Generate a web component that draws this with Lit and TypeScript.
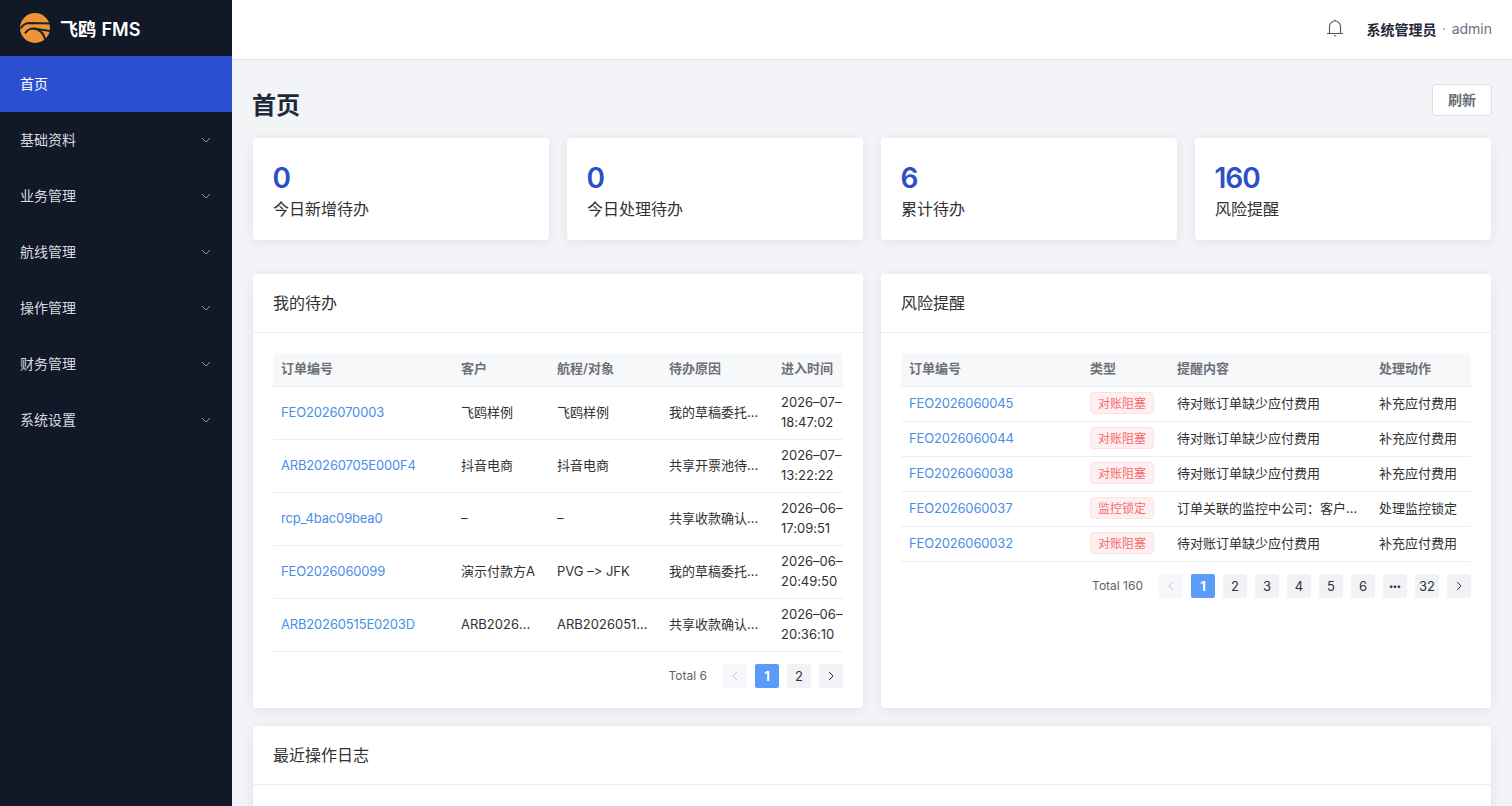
import {LitElement, css, html, nothing} from 'lit';
import {customElement} from 'lit/decorators.js';

const menu = ['基础资料', '业务管理', '航线管理', '操作管理', '财务管理', '系统设置'];

const stats = [
  {value: '0', label: '今日新增待办'},
  {value: '0', label: '今日处理待办'},
  {value: '6', label: '累计待办'},
  {value: '160', label: '风险提醒'},
];

const todos = [
  ['FEO2026070003', '飞鸥样例', '飞鸥样例', '我的草稿委托单待提交', '2026–07–', '18:47:02'],
  ['ARB20260705E000F4', '抖音电商', '抖音电商', '共享开票池待处理', '2026–07–', '13:22:22'],
  ['rcp_4bac09bea0', '–', '–', '共享收款确认待处理', '2026–06–', '17:09:51'],
  ['FEO2026060099', '演示付款方A', 'PVG –> JFK', '我的草稿委托单待提交', '2026–06–', '20:49:50'],
  ['ARB20260515E0203D', 'ARB20260515E0203D', 'ARB20260515E0203D', '共享收款确认待处理', '2026–06–', '20:36:10'],
];

const risks = [
  ['FEO2026060045', '对账阻塞', '待对账订单缺少应付费用', '补充应付费用'],
  ['FEO2026060044', '对账阻塞', '待对账订单缺少应付费用', '补充应付费用'],
  ['FEO2026060038', '对账阻塞', '待对账订单缺少应付费用', '补充应付费用'],
  ['FEO2026060037', '监控锁定', '订单关联的监控中公司：客户名称待确认', '处理监控锁定'],
  ['FEO2026060032', '对账阻塞', '待对账订单缺少应付费用', '补充应付费用'],
];

const chevronDown = html`<svg class="chev" viewBox="0 0 10 10"><path d="M1 3.2 5 7l4-3.8" fill="none" stroke="currentColor" stroke-width="1"/></svg>`;
const arrowLeft = html`<svg viewBox="0 0 10 10" width="10" height="10"><path d="M6.8 1 3 5l3.8 4" fill="none" stroke="currentColor"/></svg>`;
const arrowRight = html`<svg viewBox="0 0 10 10" width="10" height="10"><path d="M3.2 1 7 5 3.2 9" fill="none" stroke="currentColor"/></svg>`;

@customElement('app-root')
export class AppRoot extends LitElement {
  static styles = css`
    :host {
      display: flex;
      width: 1512px;
      height: 806px;
      overflow: hidden;
      font-family: Inter, "Liberation Sans", "Noto Sans CJK SC", sans-serif;
      font-size: 14px;
      font-feature-settings: "calt" 0;
      color: #303133;
      background: #f3f4f8;
    }

    * {
      box-sizing: border-box;
    }

    .side {
      flex: none;
      width: 232px;
      background: #111827;
      color: #d7dae0;
    }

    .brand {
      display: flex;
      align-items: center;
      gap: 10px;
      height: 56px;
      padding-left: 20px;
      color: #fff;
      font-size: 18px;
      font-weight: 600;
    }

    .brand-name {
      word-spacing: 1px;
    }

    .menu-item {
      display: flex;
      align-items: center;
      justify-content: space-between;
      height: 56px;
      padding: 0 21px 0 20px;
    }

    .menu-item.active {
      background: #2b4fd0;
      color: #fff;
    }

    .menu-label {
      margin-bottom: 2px;
    }

    .chev {
      width: 10px;
      height: 10px;
      color: #8d93a0;
    }

    .main {
      flex: 1;
      min-width: 0;
    }

    .top {
      display: flex;
      align-items: center;
      justify-content: flex-end;
      height: 60px;
      padding: 0 20px 2px 0;
      background: #fff;
      border-bottom: 1px solid #e4e7ed;
    }

    .bell {
      width: 18px;
      height: 18px;
      margin: 0 23px 2px 0;
      color: #4b5563;
    }

    .user {
      font-weight: 600;
      color: #1f2937;
    }

    .dot {
      margin: 0 5.5px;
      color: #909399;
    }

    .account {
      color: #6b7280;
    }

    .content {
      padding: 24px 21px 0;
    }

    .head {
      display: flex;
      align-items: flex-start;
      justify-content: space-between;
      height: 54px;
    }

    h1 {
      margin: 6px 0 0 -1px;
      font-size: 24px;
      line-height: 32px;
      font-weight: 600;
      color: #1f2937;
    }

    .refresh {
      width: 60px;
      height: 32px;
      margin-right: -1px;
      padding: 0 0 2px;
      border: 1px solid #dcdfe6;
      border-radius: 4px;
      background: #fff;
      color: #6b6e75;
      font: inherit;
      font-weight: 600;
    }

    .stats {
      display: grid;
      grid-template-columns: repeat(4, 1fr);
      gap: 18px;
      margin-bottom: 34px;
    }

    .card {
      background: #fff;
      border-radius: 4px;
      box-shadow: 0 2px 12px rgba(0, 0, 0, 0.08);
    }

    .stat {
      height: 102px;
      padding: 23px 20px 0;
    }

    .value {
      margin-left: -0.5px;
      font-size: 28px;
      line-height: 34px;
      font-weight: 600;
      letter-spacing: -1px;
      color: #2b4fc7;
    }

    .label {
      margin-top: 2px;
      font-size: 16px;
      line-height: 24px;
      color: #303133;
    }

    .panels {
      display: grid;
      grid-template-columns: 1fr 1fr;
      gap: 18px;
      margin-bottom: 18px;
    }

    .panel {
      height: 434px;
    }

    .panel-title {
      height: 59px;
      padding: 0 20px;
      border-bottom: 1px solid #ebeef5;
      font-size: 16px;
      line-height: 58px;
    }

    .panel-body {
      padding: 20px;
    }

    table {
      width: 100%;
      border-collapse: collapse;
      table-layout: fixed;
      font-size: 13px;
      color: #303133;
    }

    th {
      height: 33px;
      padding: 0 8px 4px;
      text-align: left;
      font-weight: 600;
      color: #6e7178;
      background: #f7f8fa;
      border-bottom: 1px solid #ebeef5;
    }

    td {
      padding: 0 8px 2px;
      border-bottom: 1px solid #ebeef5;
    }

    .todo td {
      height: 53px;
      line-height: 20px;
    }

    .risk td {
      height: 35px;
    }

    td > .cut {
      display: block;
      overflow: hidden;
      white-space: nowrap;
      text-overflow: ellipsis;
    }

    td > .cut.narrow {
      padding-right: 4px;
    }

    .time {
      white-space: nowrap;
      overflow: hidden;
      padding-right: 0;
    }

    .link {
      color: #4a8ee6;
      letter-spacing: -0.17px;
    }

    .tag {
      display: inline-flex;
      align-items: center;
      height: 22px;
      padding: 0 7px;
      border: 1px solid #fde2e2;
      border-radius: 4px;
      background: #fef0f0;
      color: #f56c6c;
      font-size: 12px;
    }

    .pager {
      display: flex;
      align-items: center;
      justify-content: flex-end;
      margin-top: 12px;
      font-size: 13px;
      color: #303133;
    }

    .total {
      margin-right: 8px;
      font-size: 12px;
      color: #606266;
    }

    .page {
      display: flex;
      align-items: center;
      justify-content: center;
      width: 24px;
      height: 24px;
      margin-left: 8px;
      border-radius: 2px;
      background: #f0f2f5;
    }

    .page.on {
      background: #5a9cf8;
      color: #fff;
      font-weight: 700;
    }

    .page.off {
      background: #f5f7fa;
      color: #c0c4cc;
    }

    .page.more {
      font-size: 8px;
      font-weight: 700;
    }
  `;

  private pager(total: number, pages: string[]) {
    return html`
      <div class="pager">
        <span class="total">Total ${total}</span>
        <span class="page off">${arrowLeft}</span>
        ${pages.map(
          (p, i) => html`<span class="page ${i === 0 ? 'on' : ''} ${p === '•••' ? 'more' : ''}">${p}</span>`
        )}
        <span class="page">${arrowRight}</span>
      </div>
    `;
  }

  render() {
    return html`
      <aside class="side">
        <div class="brand">
          <svg width="30" height="30" viewBox="0 0 30 30" fill="none" stroke="#1a2130" stroke-width="2">
            <circle cx="15" cy="15" r="15" fill="#f09433" stroke="none"/>
            <path d="M.7 15.5C3 11 6 10 10 10L30 10.5"/>
            <path d="M5 20.5C7 17 10 15.5 14 15.5L30 18"/>
            <path d="M14 15.5C20 16.5 24 21 25.5 27.5"/>
          </svg>
          <span class="brand-name">飞鸥 FMS</span>
        </div>
        <div class="menu-item active"><span class="menu-label">首页</span></div>
        ${menu.map((m) => html`<div class="menu-item"><span class="menu-label">${m}</span>${chevronDown}</div>`)}
      </aside>
      <div class="main">
        <header class="top">
          <svg class="bell" viewBox="0 0 18 18" fill="none" stroke="currentColor" stroke-width="1.1">
            <path d="M1 14.5h16M3.5 14.5V7.5a5.5 5.5 0 0 1 11 0v7"/>
            <path d="M9 .8V2M8 16.8h2"/>
          </svg>
          <span class="user">系统管理员</span><span class="dot">·</span><span class="account">admin</span>
        </header>
        <div class="content">
          <div class="head">
            <h1>首页</h1>
            <button class="refresh">刷新</button>
          </div>
          <div class="stats">
            ${stats.map(
              (s) => html`
                <div class="card stat">
                  <div class="value">${s.value}</div>
                  <div class="label">${s.label}</div>
                </div>
              `
            )}
          </div>
          <div class="panels">
            <section class="card panel">
              <div class="panel-title">我的待办</div>
              <div class="panel-body">
                <table class="todo">
                  <colgroup>
                    <col style="width: 180px"/><col style="width: 96px"/><col style="width: 112px"/><col style="width: 112px"/><col/>
                  </colgroup>
                  <thead>
                    <tr><th>订单编号</th><th>客户</th><th>航程/对象</th><th>待办原因</th><th>进入时间</th></tr>
                  </thead>
                  <tbody>
                    ${todos.map(
                      (r) => html`
                        <tr>
                          <td><span class="cut link">${r[0]}</span></td>
                          <td><span class="cut narrow">${r[1]}</span></td>
                          <td><span class="cut">${r[2]}</span></td>
                          <td><span class="cut">${r[3]}</span></td>
                          <td class="time">${r[4]}<br/>${r[5]}</td>
                        </tr>
                      `
                    )}
                  </tbody>
                </table>
                ${this.pager(6, ['1', '2'])}
              </div>
            </section>
            <section class="card panel">
              <div class="panel-title">风险提醒</div>
              <div class="panel-body">
                <table class="risk">
                  <colgroup>
                    <col style="width: 181px"/><col style="width: 87px"/><col style="width: 202px"/><col/>
                  </colgroup>
                  <thead>
                    <tr><th>订单编号</th><th>类型</th><th>提醒内容</th><th>处理动作</th></tr>
                  </thead>
                  <tbody>
                    ${risks.map(
                      (r) => html`
                        <tr>
                          <td><span class="cut link">${r[0]}</span></td>
                          <td><span class="tag">${r[1]}</span></td>
                          <td><span class="cut">${r[2]}</span></td>
                          <td><span class="cut">${r[3]}</span></td>
                        </tr>
                      `
                    )}
                  </tbody>
                </table>
                ${this.pager(160, ['1', '2', '3', '4', '5', '6', '•••', '32'])}
              </div>
            </section>
          </div>
          <section class="card">
            <div class="panel-title">最近操作日志</div>
            <div class="panel-body">${nothing}</div>
          </section>
        </div>
      </div>
    `;
  }
}
